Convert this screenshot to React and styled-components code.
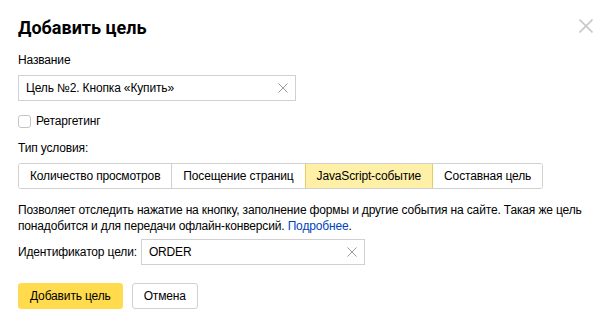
import React from "react";
import styled, { createGlobalStyle } from "styled-components";

const Global = createGlobalStyle`
  html, body { margin: 0; padding: 0; background: #fff; }
  body { font-family: "Liberation Sans", Arial, sans-serif; color: #000; }
  * { box-sizing: border-box; }
`;

const Dialog = styled.div`
  position: relative;
  width: 612px;
  height: 326px;
  padding: 17px 18px 0 18px;
  display: flex;
  flex-direction: column;
  align-items: flex-start;
  font-size: 12px;
  letter-spacing: -0.15px;
`;

const Title = styled.h1`
  margin: 0;
  font-family: Roboto, "Liberation Sans", Arial, sans-serif;
  font-size: 18px;
  line-height: 22px;
  font-weight: bold;
  letter-spacing: 0;
`;

const Close = styled.button`
  position: absolute;
  top: 19px;
  right: 19px;
  width: 14px;
  height: 14px;
  padding: 0;
  border: 0;
  background: none;
  display: flex;
`;

const Label = styled.div`
  line-height: 16px;
  margin-top: ${(p) => p.$mt || 0}px;
`;

const InputBox = styled.div`
  display: flex;
  align-items: center;
  width: ${(p) => p.$w}px;
  height: 26px;
  border: 1px solid #d0d0d0;
  margin-top: ${(p) => p.$mt || 0}px;
  padding: 0 7px 0 7px;
  background: #fff;
`;

const InputText = styled.span`
  flex: 1;
  white-space: nowrap;
`;

const Clear = styled.span`
  display: flex;
  width: 10px;
  height: 10px;
`;

const CheckRow = styled.label`
  display: flex;
  align-items: center;
  gap: 5px;
  margin-top: 12px;
  line-height: 16px;
`;

const Box = styled.span`
  width: 13px;
  height: 13px;
  border: 1px solid #c4c4c4;
  border-radius: 3px;
  background: #fff;
`;

const Segments = styled.div`
  display: flex;
  margin-top: 7px;
  height: 26px;
  border: 1px solid #d0d0d0;
  border-radius: 3px;
  overflow: hidden;
`;

const Segment = styled.div`
  display: flex;
  align-items: center;
  padding: 0 11px;
  white-space: nowrap;
  background: ${(p) => (p.$active ? "#fff0a8" : "#fff")};
  border-left: 1px solid ${(p) => (p.$active || p.$afterActive ? "#e3cc6a" : "#d0d0d0")};
  margin: ${(p) => (p.$active ? "-1px 0" : "0")};
  border-top: ${(p) => (p.$active ? "1px solid #e3cc6a" : "0")};
  border-bottom: ${(p) => (p.$active ? "1px solid #e3cc6a" : "0")};
  &:first-child { border-left: 0; }
`;

const Description = styled.p`
  margin: 13px 0 0 0;
  line-height: 16px;
  width: 576px;
`;

const Link = styled.a`
  color: #0044bb;
  text-decoration: none;
`;

const IdRow = styled.div`
  display: flex;
  align-items: center;
  gap: 4px;
  margin-top: 5px;
`;

const Actions = styled.div`
  display: flex;
  gap: 9px;
  margin-top: 18px;
`;

const Button = styled.button`
  height: 26px;
  padding: 0 11px;
  font-family: inherit;
  font-size: 12px;
  letter-spacing: inherit;
  color: #000;
  border-radius: 3px;
  border: 1px solid ${(p) => (p.$primary ? "#ffdb4d" : "#d0d0d0")};
  background: ${(p) => (p.$primary ? "#ffdb4d" : "#fff")};
`;

const XIcon = ({ size, color, width }) => (
  <svg width={size} height={size} viewBox={`0 0 ${size} ${size}`}>
    <path
      d={`M0.5 0.5 L${size - 0.5} ${size - 0.5} M${size - 0.5} 0.5 L0.5 ${size - 0.5}`}
      stroke={color}
      strokeWidth={width}
      fill="none"
    />
  </svg>
);

export default function App() {
  return (
    <>
      <Global />
      <Dialog>
        <Title>Добавить цель</Title>
        <Close aria-label="Закрыть">
          <XIcon size={14} color="#c8c8c8" width={1.6} />
        </Close>
        <Label $mt={13}>Название</Label>
        <InputBox $w={278} $mt={7}>
          <InputText>Цель №2. Кнопка «Купить»</InputText>
          <Clear>
            <XIcon size={10} color="#999" width={1} />
          </Clear>
        </InputBox>
        <CheckRow>
          <Box />
          Ретаргетинг
        </CheckRow>
        <Label $mt={11}>Тип условия:</Label>
        <Segments>
          <Segment>Количество просмотров</Segment>
          <Segment>Посещение страниц</Segment>
          <Segment $active>JavaScript-событие</Segment>
          <Segment $afterActive>Составная цель</Segment>
        </Segments>
        <Description>
          Позволяет отследить нажатие на кнопку, заполнение формы и другие события на сайте. Такая же цель
          понадобится и для передачи офлайн-конверсий. <Link href="#">Подробнее</Link>.
        </Description>
        <IdRow>
          Идентификатор цели:
          <InputBox $w={224}>
            <InputText>ORDER</InputText>
            <Clear>
              <XIcon size={10} color="#999" width={1} />
            </Clear>
          </InputBox>
        </IdRow>
        <Actions>
          <Button $primary>Добавить цель</Button>
          <Button>Отмена</Button>
        </Actions>
      </Dialog>
    </>
  );
}
